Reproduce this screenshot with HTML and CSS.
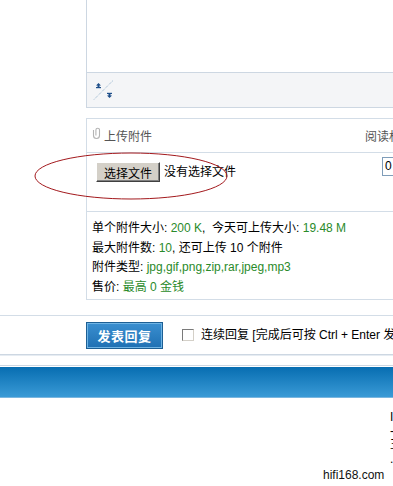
FILE: index.html
```html
<!DOCTYPE html>
<html>
<head>
<meta charset="utf-8">
<link rel="stylesheet" href="styles.css">
</head>
<body>
<div class="page">
  <div class="editor">
    <div class="textarea"></div>
    <div class="toolbar">
      <svg class="resize" width="22" height="22" viewBox="0 0 22 22">
        <line x1="1" y1="19.5" x2="20" y2="0.5" stroke="#8fb0cc" stroke-width="1" stroke-dasharray="1 1"/>
        <polygon points="5.5,3 3,5.5 4.5,5.5 4.5,7 6.5,7 6.5,5.5 8,5.5" fill="#1f4f8a"/>
        <rect x="3" y="7" width="5" height="1.2" fill="#1f4f8a"/>
        <rect x="14" y="12.8" width="5" height="1.2" fill="#1f4f8a"/>
        <polygon points="16.5,18 14,15.5 15.5,15.5 15.5,14 17.5,14 17.5,15.5 19,15.5" fill="#1f4f8a"/>
      </svg>
    </div>
  </div>

  <div class="upload">
    <div class="upload-head">
      <span class="clip">
        <svg width="9" height="13" viewBox="0 0 9 13"><path d="M1.5 3 V8.5 a3 3 0 0 0 6 0 V3 a1.8 1.8 0 0 0 -3.6 0 V8.5" fill="none" stroke="#b4b4b4" stroke-width="1.1"/></svg>
      </span>
      <span class="head-title">上传附件</span>
      <span class="head-right">阅读权限</span>
    </div>
    <div class="upload-row">
      <span class="file-btn">选择文件</span>
      <span class="file-none">没有选择文件</span>
      <span class="perm-input">0</span>
    </div>
    <div class="upload-info">
      <p>单个附件大小: <em>200 K</em>,&nbsp; 今天可上传大小: <em>19.48 M</em></p>
      <p>最大附件数: <em>10</em>, 还可上传 10 个附件</p>
      <p>附件类型: <em>jpg,gif,png,zip,rar,jpeg,mp3</em></p>
      <p>售价: <em>最高 0 金钱</em></p>
    </div>
  </div>

  <div class="reply-row">
    <span class="submit">发表回复</span>
    <span class="check"></span>
    <span class="check-label">连续回复 [完成后可按 Ctrl + Enter 发布]</span>
  </div>
  <div class="double-line"></div>
  <div class="bluebar"></div>

  <div class="footer">
    <span class="site">hifi168.com</span>
    <div class="edge">
      <span>I</span>
      <span>-</span>
      <span>王</span>
      <span>.</span>
    </div>
  </div>

  <svg class="ellipse" width="200" height="54" viewBox="0 0 200 54">
    <ellipse cx="97" cy="24" rx="96" ry="23" fill="none" stroke="#a3191d" stroke-width="1"/>
  </svg>
</div>
</body>
</html>
```

FILE: styles.css
```css
html, body {
  margin: 0;
  padding: 0;
  background: #fff;
  overflow: hidden;
}
body {
  width: 393px;
  height: 486px;
  font-family: "Liberation Sans", "Noto Sans CJK SC", sans-serif;
  font-size: 12px;
  color: #000;
}
.page {
  position: relative;
  width: 393px;
  height: 486px;
  overflow: hidden;
}
.editor {
  margin-left: 86px;
  width: 400px;
  border-left: 1px solid #cdd7e2;
  border-bottom: 1px solid #cdd7e2;
}
.textarea {
  height: 72px;
  border-bottom: 1px solid #cdd7e2;
  background: #fff;
}
.toolbar {
  height: 34px;
  background: #f4f5f7;
  display: flex;
  align-items: flex-start;
  padding-left: 6px;
  padding-top: 7px;
  box-sizing: border-box;
}
.resize { display: block; flex-shrink: 0; }

.upload {
  margin-top: 10px;
  margin-left: 86px;
  width: 400px;
  border: 1px solid #d3dde7;
  border-right: none;
}
.upload-head {
  height: 33px;
  border-bottom: 1px solid #d3dde7;
  display: flex;
  align-items: center;
  padding-left: 5px;
  color: #555;
  white-space: nowrap;
}
.upload-head > * { flex-shrink: 0; }
.clip {
  display: inline-flex;
  width: 9px;
  margin-right: 3px;
  margin-top: -4px;
}
.head-title { color: #555; }
.head-right {
  margin-left: auto;
  margin-right: 74px;
  color: #555;
}
.upload-row {
  height: 59px;
  border-bottom: 1px solid #d3dde7;
  display: flex;
  align-items: flex-start;
  padding-left: 9px;
  padding-top: 9px;
  box-sizing: border-box;
  white-space: nowrap;
}
.upload-row > * { flex-shrink: 0; }
.file-btn {
  display: inline-flex;
  align-items: center;
  justify-content: center;
  width: 64px;
  height: 20px;
  box-sizing: border-box;
  background: #d4d0c8;
  border: 1px solid;
  border-color: #fff #404040 #404040 #fff;
  box-shadow: inset -1px -1px 0 #808080;
  color: #000;
}
.file-none {
  margin-left: 4px;
  line-height: 20px;
}
.perm-input {
  margin-left: auto;
  margin-right: 81px;
  margin-top: -5px;
  width: 24px;
  height: 19px;
  box-sizing: border-box;
  border: 1px solid #7f9db9;
  padding-left: 2px;
  line-height: 17px;
}
.upload-info {
  padding: 7px 0 2px 5px;
}
.upload-info p {
  margin: 0;
  line-height: 19.5px;
}
.upload-info em {
  font-style: normal;
  color: #2a8a2a;
}

.reply-row {
  margin-top: 15px;
  height: 39px;
  border-top: 1px solid #d3dde7;
  display: flex;
  align-items: center;
  padding-left: 86px;
  box-sizing: border-box;
  white-space: nowrap;
}
.reply-row > * { flex-shrink: 0; }
.submit {
  display: inline-flex;
  align-items: center;
  justify-content: center;
  width: 77px;
  height: 27px;
  box-sizing: border-box;
  border: 1px solid #1d5f94;
  box-shadow: inset 0 0 0 1px #6fb4e4;
  background: linear-gradient(#3a8fd0, #1f70b3);
  color: #fff;
  font-weight: bold;
  font-size: 13px;
  letter-spacing: 0.5px;
}
.check {
  margin-left: 19px;
  width: 12px;
  height: 12px;
  box-sizing: border-box;
  border: 1px solid #7a7a7a;
  border-right-color: #d4d0c8;
  border-bottom-color: #d4d0c8;
  background: #fff;
}
.check-label {
  margin-left: 7px;
  line-height: 16px;
}
.double-line {
  height: 12px;
  border-top: 1px solid #cdd7e2;
  border-bottom: 1px solid #cdd7e2;
  box-sizing: border-box;
  box-shadow: inset 0 1px 0 #e6ecf2;
}
.bluebar {
  margin-top: 1px;
  height: 30px;
  background: linear-gradient(#076db1, #3a9ad6);
  border-bottom: 1px solid #7ab6df;
}
.footer {
  position: relative;
  height: 90px;
}
.site {
  position: absolute;
  left: 323px;
  top: 70px;
  font-size: 12px;
  color: #111;
}
.edge {
  position: absolute;
  left: 390px;
  top: 12px;
  display: flex;
  flex-direction: column;
  line-height: 14px;
  font-size: 12px;
}
.ellipse {
  position: absolute;
  left: 34px;
  top: 152px;
}
```
